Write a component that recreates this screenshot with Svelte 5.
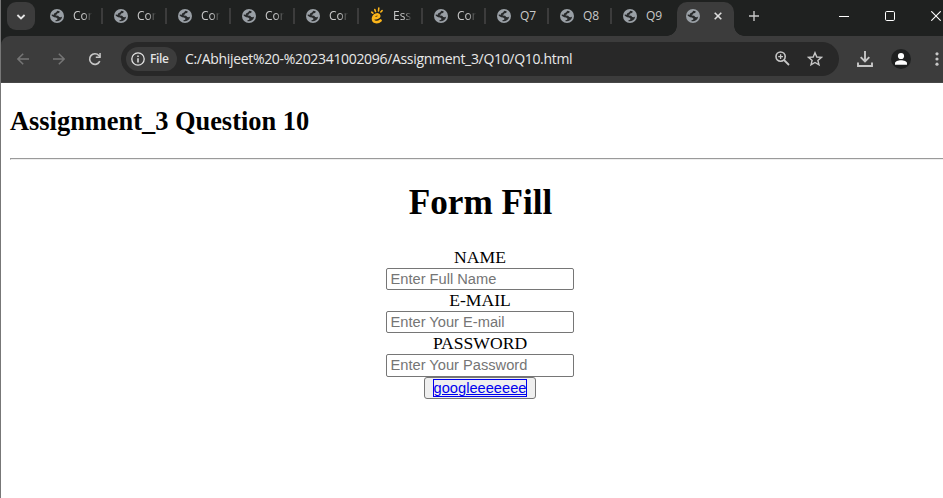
<script>
  const tabs = [
    { t: 'Cor', w: 64 }, { t: 'Cor', w: 64 }, { t: 'Cor', w: 64 }, { t: 'Cor', w: 64 },
    { t: 'Cor', w: 64 }, { t: 'Ess', w: 64, e: true }, { t: 'Cor', w: 63 },
    { t: 'Q7', w: 63 }, { t: 'Q8', w: 63 }, { t: 'Q9', w: 63 }
  ];
  const fields = [
    { label: 'NAME', hint: 'Enter Full Name', type: 'text' },
    { label: 'E-MAIL', hint: 'Enter Your E-mail', type: 'email' },
    { label: 'PASSWORD', hint: 'Enter Your Password', type: 'password' }
  ];
</script>

{#snippet globe()}
  <svg class="globe" width="14" height="14" viewBox="0 0 14 14">
    <circle cx="7" cy="7" r="7" fill="#9aa0a6" />
    <path d="M7.3 1.7 9.7 2.3 9.2 3.9 7.4 4.3 7 5.4 5.6 5.7 5.9 6.6 8.2 6.8 9.2 8.1 11 8.3 12.2 7.6A5.4 5.4 0 0 1 5.6 12.2L5.4 11.2 7.2 10.8 7.4 9.6 6 8.5 4.2 8.3 1.7 6.7 1.8 5.6 3.8 5.8 4.3 4.3 6 3.6Z" fill="#282a2b" />
  </svg>
{/snippet}

<div class="window">
  <div class="strip">
    <button class="search" aria-label="Search tabs">
      <svg width="10" height="8" viewBox="0 0 10 8"><path d="M1.4 2 5 5.5 8.6 2" fill="none" stroke="#e5e5e5" stroke-width="1.8" /></svg>
    </button>
    <div class="tabs">
      {#each tabs as tab}
        <div class="tab" style:width="{tab.w}px">
          {#if tab.e}
            <svg class="hand" width="14" height="17" viewBox="0 0 14 17" fill="none" stroke="#fbb51a" stroke-linecap="round">
              <path d="M3.1 11.2 C6 11.5 9.6 10.4 9.2 8.5 C8.6 6.2 3.2 7.5 3 11.6 C2.8 15.6 7.8 16 10.6 13.5" stroke-width="2.6" />
              <path d="M1.7 5.2 2.9 6.2 M4.8 2.6 5.5 4.5 M8.8 1 8.5 4 M12.1 3.6 10.8 5" stroke-width="1.6" />
            </svg>
          {:else}
            {@render globe()}
          {/if}
          <span class:fade={!tab.t.startsWith('Q')}>{tab.t}</span>
        </div>
      {/each}
    </div>
    <div class="active">
      {@render globe()}
      <svg class="close" width="8" height="8" viewBox="0 0 8 8"><path d="M.7.7 7.3 7.3 M7.3.7 .7 7.3" stroke="#dedede" stroke-width="1.6" /></svg>
    </div>
    <svg class="plus" width="10" height="10" viewBox="0 0 10 10"><path d="M5 0V10M0 5H10" stroke="#c7c7c7" stroke-width="1.4" /></svg>
    <div class="controls">
      <svg width="10" height="10" viewBox="0 0 10 10"><path d="M0 5.5H10" stroke="#fff" /></svg>
      <svg width="10" height="10" viewBox="0 0 10 10"><rect x=".5" y=".5" width="9" height="9" rx="1.2" fill="none" stroke="#fff" /></svg>
      <svg width="10" height="10" viewBox="0 0 10 10"><path d="M.3.3 9.7 9.7M9.7.3 .3 9.7" stroke="#fff" stroke-width="1.1" /></svg>
    </div>
  </div>

  <div class="toolbar">
    <svg class="back" width="12" height="12" viewBox="0 0 12 12" fill="none" stroke="#757575" stroke-width="1.5"><path d="M12 6H1M6.2.7 .9 6 6.2 11.3" /></svg>
    <svg class="forward" width="12" height="12" viewBox="0 0 12 12" fill="none" stroke="#757575" stroke-width="1.5"><path d="M0 6H11M5.8.7 11.1 6 5.8 11.3" /></svg>
    <svg class="reload" width="14" height="14" viewBox="0 0 14 14"><path d="M11.8 9.2A5.3 5.3 0 1 1 10.9 3.5L12 4.6" fill="none" stroke="#c7c7c7" stroke-width="1.6" /><path d="M12.8 1V6H7.8V4.5H11.3V1Z" fill="#c7c7c7" /></svg>
    <div class="omnibox">
      <div class="chip">
        <svg width="14" height="14" viewBox="0 0 14 14"><circle cx="7" cy="7" r="6.2" fill="none" stroke="#e3e3e3" stroke-width="1.3" /><path d="M7 6.2V10.4M7 3.5V5" stroke="#e3e3e3" stroke-width="1.5" /></svg>
        <b>File</b>
      </div>
      <span class="url">C:/Abhijeet%20-%202341002096/Assignment_3/Q10/Q10.html</span>
      <svg class="zoom" width="15" height="15" viewBox="0 0 15 15" fill="none" stroke="#c7c7c7"><circle cx="5.6" cy="5.6" r="4.6" stroke-width="1.6" /><path d="M9 9 14 14" stroke-width="1.8" /><path d="M5.6 3.2V8M3.2 5.6H8" stroke-width="1.3" /></svg>
      <svg class="star" width="16" height="16" viewBox="0 0 16 16"><path d="M8 1.7 9.8 6 14.4 6.4 10.9 9.4 12 13.9 8 11.5 4 13.9 5.1 9.4 1.6 6.4 6.2 6Z" fill="none" stroke="#c7c7c7" stroke-width="1.4" /></svg>
    </div>
    <svg class="download" width="16" height="16" viewBox="0 0 16 16" fill="none" stroke="#c7c7c7" stroke-width="1.9"><path d="M8 0V10M3.7 6.2 8 10.5 12.3 6.2M1 11.5V15H15V11.5" /></svg>
    <svg class="person" width="20" height="20" viewBox="0 0 20 20"><circle cx="10" cy="10" r="10" fill="#1f2020" /><circle cx="10" cy="7" r="3.1" fill="#fff" /><path d="M4 15.8V14.2C4 12.2 7.2 11.2 10 11.2S16 12.2 16 14.2V15.8Z" fill="#fff" /></svg>
    <svg class="menu" width="4" height="14" viewBox="0 0 4 14" fill="#c7c7c7"><circle cx="2" cy="1.8" r="1.6" /><circle cx="2" cy="7" r="1.6" /><circle cx="2" cy="12.2" r="1.6" /></svg>
  </div>

  <main>
    <h2>Assignment_3 Question 10</h2>
    <hr />
    <form>
      <h1>Form Fill</h1>
      {#each fields as f}
        <label><span>{f.label}</span><input type={f.type} placeholder={f.hint} /></label>
      {/each}
      <button class="submit" type="button"><span>googleeeeeee</span></button>
    </form>
  </main>
</div>

<style>
  :global(body) { margin: 0; overflow: hidden; }
  .window { box-sizing: border-box; width: 943px; height: 498px; overflow: hidden; border-left: 1px solid #777; background: #1f2120; font-family: "Open Sans", "Noto Sans", sans-serif; }
  svg { display: block; flex: none; }
  .strip { display: flex; height: 36px; }
  .search { display: flex; align-items: center; justify-content: center; width: 28px; height: 28px; margin: 2px 4px 0 6px; padding: 2px 0 0; border: 0; border-radius: 9px; background: #3c3c3c; flex: none; }
  .tabs { display: flex; }
  .tab { box-sizing: border-box; display: flex; align-items: center; flex: none; height: 16px; margin-top: 8px; padding-left: 11px; border-right: 2px solid #3c3c3c; font-size: 12px; line-height: 16px; color: #c9c9c9; }
  .tab:last-child { border-color: transparent; }
  .tab span { width: 20px; margin-left: 9px; white-space: nowrap; }
  .hand { margin-top: -1px; }
  .fade { -webkit-mask-image: linear-gradient(90deg, #000 55%, transparent 96%); mask-image: linear-gradient(90deg, #000 55%, transparent 96%); }
  .active { position: relative; display: flex; align-items: center; box-sizing: border-box; width: 57px; height: 34px; margin: 2px 0 0 2px; padding: 0 0 6px 9px; border-radius: 10px 10px 0 0; background: #3c3c3c; flex: none; }
  .active::before, .active::after { content: ""; position: absolute; bottom: 0; width: 10px; height: 10px; }
  .active::before { left: -10px; background: radial-gradient(circle at 0 0, transparent 9.5px, #3c3c3c 10px); }
  .active::after { right: -10px; background: radial-gradient(circle at 100% 0, transparent 9.5px, #3c3c3c 10px); }
  .close { margin-left: 14px; }
  .plus { margin: 11px 0 0 15px; }
  .controls { display: flex; gap: 36px; margin: 11px 0 0 80px; }
  .toolbar { box-sizing: border-box; display: flex; align-items: center; height: 47px; padding: 0 0 1px 16px; border-bottom: 1px solid #474747; border-radius: 9px 0 0 0; background: #3c3c3c; }
  .forward { margin-left: 24px; }
  .reload { margin-left: 23px; }
  .omnibox { box-sizing: border-box; display: flex; align-items: center; width: 718px; height: 34px; margin-left: 19px; padding-left: 5px; border-radius: 17px; background: #282828; flex: none; }
  .chip { box-sizing: border-box; display: flex; align-items: center; gap: 5px; width: 51px; height: 24px; padding-left: 5px; border-radius: 12px; background: #3c3c3c; color: #e3e3e3; font-size: 12px; letter-spacing: -.35px; flex: none; }
  .chip b { font-weight: 600; }
  .url { width: 590px; margin-left: 8px; color: #e8e8e8; font-size: 14px; letter-spacing: -.32px; white-space: nowrap; }
  .star { margin-left: 17px; }
  .download { margin-left: 18px; }
  .person { margin-left: 18px; }
  .menu { margin-left: 24px; }
  main { box-sizing: border-box; height: 415px; padding: 23px 0 0 9px; background: #fff; color: #000; font: 17.6px/20px "Liberation Serif", "Times New Roman", serif; }
  h2 { margin: 0; font-size: 26.4px; line-height: 30px; }
  hr { height: 0; margin: 22px 0 0; border: 0; border-top: 1px solid #9a9a9a; border-bottom: 1px solid #eee; border-left: 1px solid #9a9a9a; }
  form { display: flex; flex-direction: column; align-items: center; width: 940px; padding-top: 23px; }
  h1 { margin: 0 0 24px; padding-left: 1px; font-size: 35.2px; line-height: 40px; }
  label { display: flex; flex-direction: column; align-items: center; height: 43px; }
  label:last-of-type { height: 44px; }
  label span { flex: none; height: 21px; line-height: 20px; }
  input { box-sizing: border-box; flex: none; width: 188px; height: 22px; padding: 1px 3px 1px 3.5px; border: 1px solid #767676; border-radius: 2px; background: #fff; font: 14.67px "Liberation Sans", Arial, sans-serif; outline: 0; }
  input[type="password"] { height: 23px; padding-bottom: 2px; }
  input::placeholder { color: #757575; }
  .submit { box-sizing: border-box; width: 112px; height: 22px; padding: 0; border: 1px solid #767676; border-radius: 3px; background: #efefef; font: 14.67px/16px "Liberation Sans", Arial, sans-serif; }
  .submit span { display: inline-block; border: 1px solid #00e; color: #00e; text-decoration: underline; }
</style>
